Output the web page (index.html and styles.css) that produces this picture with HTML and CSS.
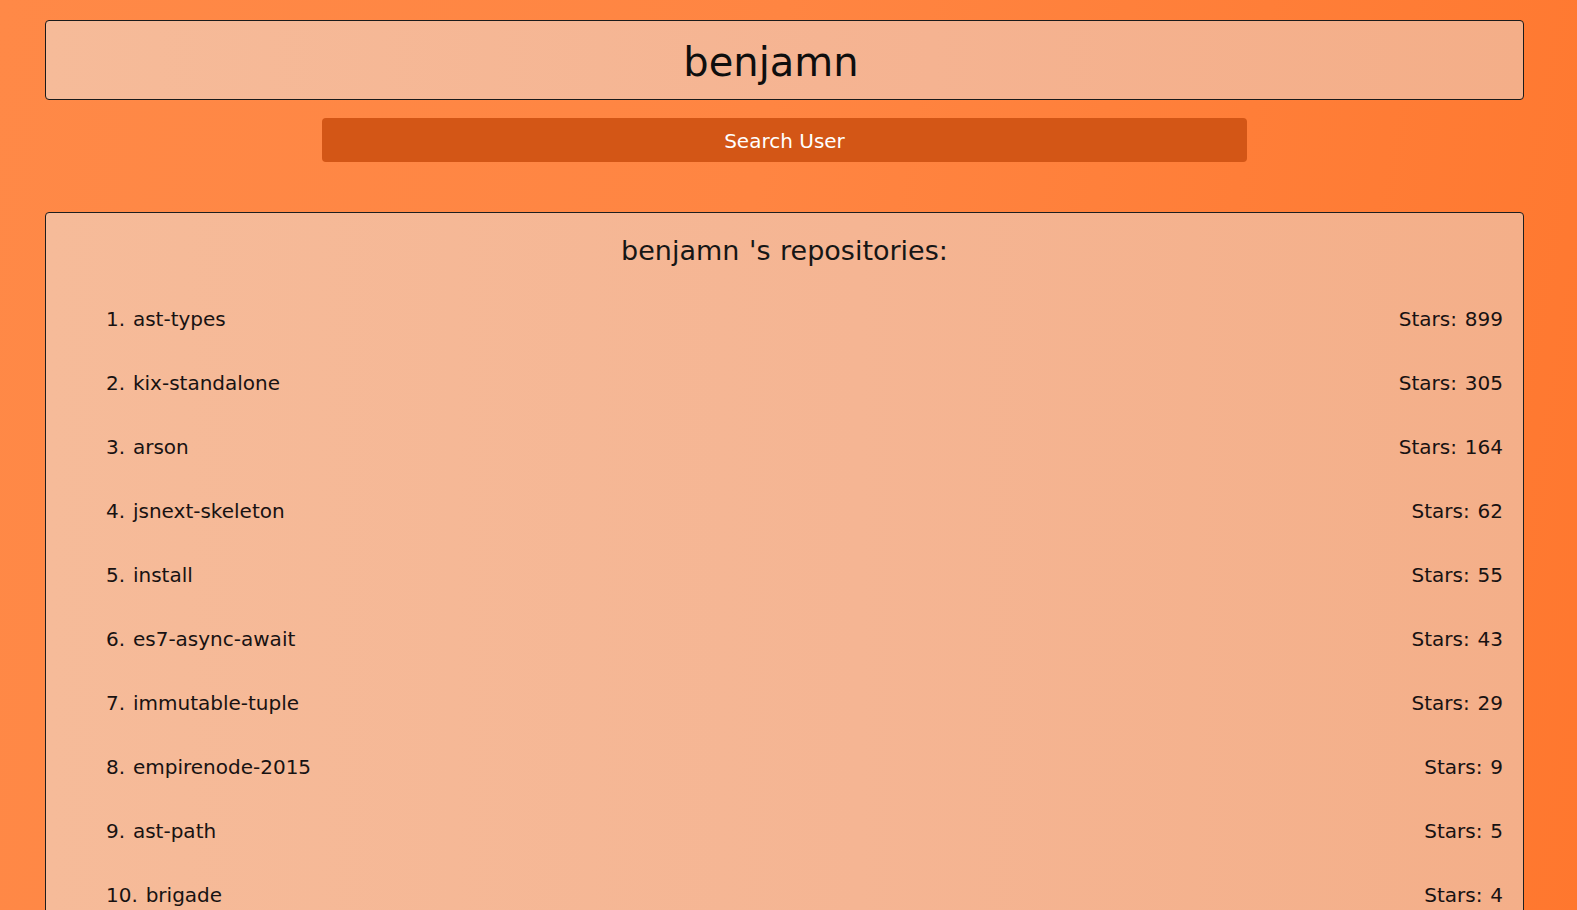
FILE: index.html
```html
<!DOCTYPE html>
<html lang="en">
<head>
<meta charset="utf-8">
<title>GitHub repositories</title>
<link rel="stylesheet" href="styles.css">
</head>
<body>
<div class="page">
  <form class="search">
    <input class="search-input" type="text" value="benjamn">
    <button class="search-button" type="button">Search User</button>
  </form>
  <section class="repos">
    <h2 class="repos-title">benjamn 's repositories:</h2>
    <ul class="repo-list">
      <li class="repo"><span>1. ast-types</span><span>Stars: 899</span></li>
      <li class="repo"><span>2. kix-standalone</span><span>Stars: 305</span></li>
      <li class="repo"><span>3. arson</span><span>Stars: 164</span></li>
      <li class="repo"><span>4. jsnext-skeleton</span><span>Stars: 62</span></li>
      <li class="repo"><span>5. install</span><span>Stars: 55</span></li>
      <li class="repo"><span>6. es7-async-await</span><span>Stars: 43</span></li>
      <li class="repo"><span>7. immutable-tuple</span><span>Stars: 29</span></li>
      <li class="repo"><span>8. empirenode-2015</span><span>Stars: 9</span></li>
      <li class="repo"><span>9. ast-path</span><span>Stars: 5</span></li>
      <li class="repo"><span>10. brigade</span><span>Stars: 4</span></li>
    </ul>
  </section>
</div>
</body>
</html>
```
FILE: styles.css
```css
* { box-sizing: border-box; }

html, body {
  margin: 0;
  padding: 0;
}

body {
  min-height: 100vh;
  background: linear-gradient(100deg, #ff8947 0%, #ff8542 45%, #ff772e 100%);
  font-family: "DejaVu Sans", Verdana, sans-serif;
  color: #1a1a1a;
}

.page {
  width: 1569px;
  padding: 20px 45px 40px;
}

.search {
  display: flex;
  flex-direction: column;
  align-items: center;
  margin: 0;
}

.search-input {
  display: block;
  width: 100%;
  height: 80px;
  padding: 3px 27px 0 0;
  border: 1px solid #1a1a1a;
  border-radius: 4px;
  background: linear-gradient(90deg, #f6bb99 0%, #f5b391 60%, #f4ae88 100%);
  font-family: "DejaVu Sans", Verdana, sans-serif;
  font-size: 40px;
  color: #0e0e0e;
  text-align: center;
  outline: none;
}

.search-button {
  margin-top: 18px;
  width: 925px;
  height: 44px;
  padding-top: 2px;
  border: none;
  border-radius: 4px;
  background: #d35616;
  color: #fff;
  font-family: "DejaVu Sans", Verdana, sans-serif;
  font-size: 20px;
  cursor: pointer;
}

.repos {
  margin-top: 50px;
  border: 1px solid #1e1e1e;
  border-radius: 4px;
  background: linear-gradient(90deg, #f6bb99 0%, #f5b593 55%, #f4af89 100%);
  padding: 22px 0 20px;
}

.repos-title {
  margin: 0;
  font-size: 27px;
  font-weight: normal;
  line-height: 32px;
  word-spacing: 1px;
  text-align: center;
  color: #161616;
}

.repo-list {
  list-style: none;
  margin: 20px 0 0;
  padding: 0 20px 0 60px;
}

.repo {
  display: flex;
  justify-content: space-between;
  align-items: center;
  height: 64px;
  font-size: 20px;
  word-spacing: 1.5px;
  color: #181212;
}
```
